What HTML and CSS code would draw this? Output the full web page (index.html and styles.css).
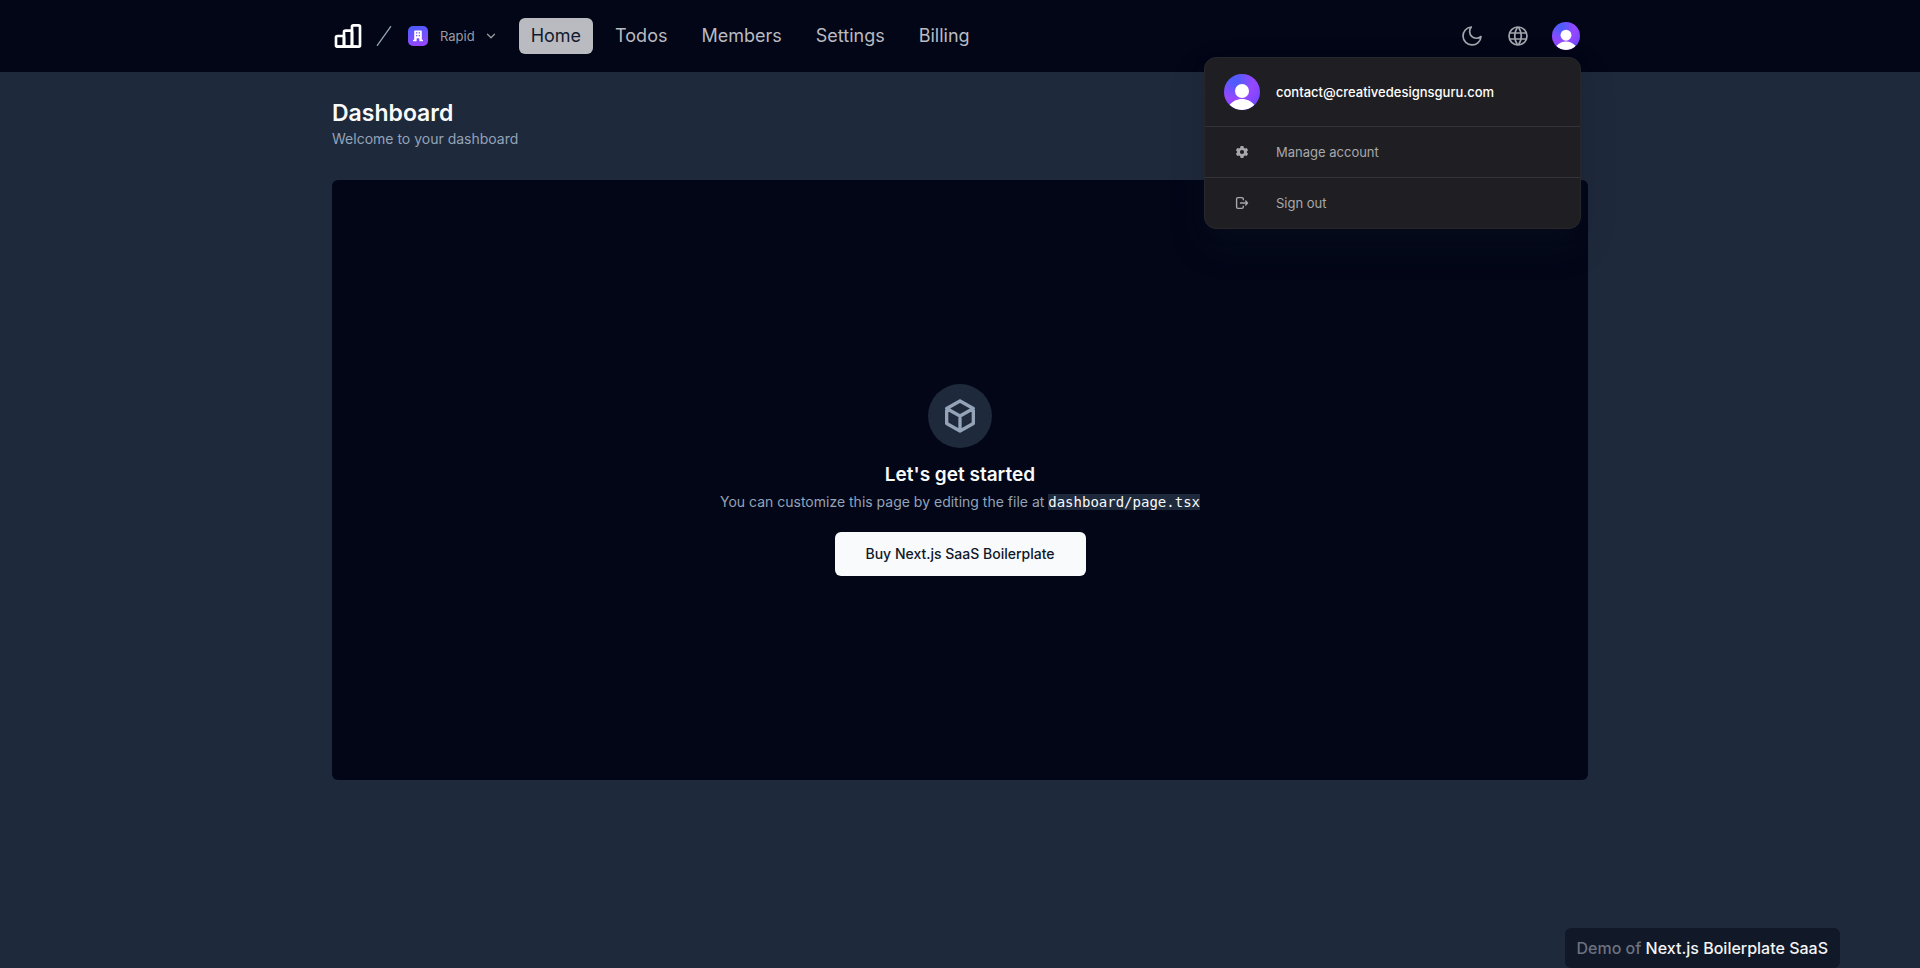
FILE: index.html
```html
<!DOCTYPE html>
<html lang="en">
<head>
<meta charset="utf-8">
<meta name="viewport" content="width=device-width, initial-scale=1">
<title>Dashboard</title>
<link rel="stylesheet" href="styles.css">
</head>
<body>
<header class="topbar">
  <div class="container topbar-inner">
    <a class="logo" href="#" aria-label="Home page">
      <svg width="32" height="32" viewBox="0 0 24 24" fill="none" stroke="currentColor" stroke-width="2" stroke-linecap="round" stroke-linejoin="round"><rect x="3" y="12" width="6" height="8" rx="1"/><rect x="9" y="8" width="6" height="12" rx="1"/><rect x="15" y="4" width="6" height="16" rx="1"/><path d="M4 20h14"/></svg>
    </a>
    <svg class="slash" width="32" height="32" viewBox="0 0 24 24" fill="none" stroke="currentColor" stroke-linecap="round"><path d="M17 5 7 19"/></svg>
    <button class="org" type="button">
      <span class="org-icon">
        <svg width="12" height="12" viewBox="0 0 12 12" fill="#fff"><path fill-rule="evenodd" d="M2.2 1.1C2.2.7 2.5.4 2.9.4h6.2c.4 0 .7.3.7.7v8.6h.6c.4 0 .7.3.7.8s-.3.8-.7.8H7.4V9c0-.4-.3-.7-.7-.7H5.3c-.4 0-.7.3-.7.7v2.300H1.600c-.4 0-.7-.3-.7-.8s.3-.8.7-.8h.6zM4 2.300v1.300h1.300V2.300zm2.700 0v1.300H8V2.300zM4 5v1.300h1.300V5zm2.700 0v1.300H8V5z"/></svg>
      </span>
      <span>Rapid</span>
      <svg class="chevron" width="10" height="10" viewBox="0 0 10 10" fill="none" stroke="currentColor" stroke-width="1.300" stroke-linecap="round" stroke-linejoin="round"><path d="m1.500 3.200 3.500 3.500 3.500-3.500"/></svg>
    </button>
    <nav class="nav" aria-label="Main">
      <a class="active" href="#" aria-current="page">Home</a>
      <a href="#">Todos</a>
      <a href="#">Members</a>
      <a href="#">Settings</a>
      <a href="#">Billing</a>
    </nav>
    <div class="actions">
      <button class="icon-button" type="button" aria-label="Toggle theme">
        <svg width="24" height="24" viewBox="0 0 24 24" fill="none" stroke="currentColor" stroke-width="1.700" stroke-linecap="round" stroke-linejoin="round"><path d="M11.300 3a9 9 0 1 0 9.700 9.500A6.800 6.800 0 0 1 11.300 3z"/></svg>
      </button>
      <button class="icon-button" type="button" aria-label="Change language">
        <svg width="24" height="24" viewBox="0 0 24 24" fill="none" stroke="currentColor" stroke-width="1.700"><circle cx="12" cy="12" r="9"/><path d="M3.600 9h16.800M3.600 15h16.800M11.500 3a17 17 0 0 0 0 18M12.500 3a17 17 0 0 1 0 18"/></svg>
      </button>
      <div class="user">
        <button class="avatar" type="button" aria-label="Open user menu" aria-expanded="true">
          <svg width="28" height="28" viewBox="0 0 36 36" fill="#fff"><circle cx="18" cy="17" r="7"/><path d="M5.500 31c3-3.700 7.500-6 12.500-6s9.500 2.300 12.500 6A18 18 0 0 1 18 36 18 18 0 0 1 5.500 31z"/></svg>
        </button>
        <div class="menu">
          <div class="menu-head">
            <span class="menu-icon"><span class="avatar avatar-large">
              <svg width="36" height="36" viewBox="0 0 36 36" fill="#fff"><circle cx="18" cy="17" r="7"/><path d="M5.500 31c3-3.700 7.500-6 12.500-6s9.500 2.300 12.500 6A18 18 0 0 1 18 36 18 18 0 0 1 5.500 31z"/></svg>
            </span></span>
            <span>contact@creativedesignsguru.com</span>
          </div>
          <button class="menu-item" type="button">
            <span class="menu-icon"><svg width="16" height="16" viewBox="0 0 16 16" fill="currentColor"><path fill-rule="evenodd" d="M6.600 2h2.800l.4 1.700 1.200.7 1.700-.5 1.400 2.400L12.900 7.500v1l1.200 1.200-1.400 2.400-1.700-.5-1.200.7L9.400 14H6.600l-.4-1.700-1.200-.7-1.700.5-1.400-2.400 1.200-1.200v-1L1.900 6.300l1.400-2.400 1.700.5 1.200-.7zM8 5.900a2.100 2.100 0 1 0 0 4.200 2.100 2.100 0 0 0 0-4.200z"/></svg></span>
            <span>Manage account</span>
          </button>
          <button class="menu-item" type="button">
            <span class="menu-icon"><svg width="16" height="16" viewBox="0 0 16 16" fill="none" stroke="currentColor" stroke-width="1.400" stroke-linecap="round" stroke-linejoin="round"><path d="M9.300 4.700V4c0-.8-.6-1.400-1.400-1.400H4c-.8 0-1.400.6-1.400 1.400v8c0 .8.6 1.400 1.400 1.400h3.900c.8 0 1.400-.6 1.400-1.400v-.7M6.500 8h7M11.700 6.100 13.500 8l-1.800 1.900"/></svg></span>
            <span>Sign out</span>
          </button>
        </div>
      </div>
    </div>
  </div>
</header>
<main class="container main">
  <h1>Dashboard</h1>
  <p class="subtitle">Welcome to your dashboard</p>
  <section class="card">
    <div class="card-icon">
      <svg width="40" height="40" viewBox="0 0 24 24" fill="none" stroke="currentColor" stroke-width="2" stroke-linejoin="round" stroke-linecap="round"><path d="m12 3 8 4.500v9L12 21l-8-4.500v-9L12 3M12 12l8-4.500M12 12v9M12 12 4 7.500"/></svg>
    </div>
    <h2>Let's get started</h2>
    <p class="hint">You can customize this page by editing the file at <code>dashboard/page.tsx</code></p>
    <a class="buy" href="#">Buy Next.js SaaS Boilerplate</a>
  </section>
</main>
<aside class="demo">Demo of <a href="#">Next.js Boilerplate SaaS</a></aside>
</body>
</html>
```
FILE: styles.css
```css
* { box-sizing: border-box; }
body {
  margin: 0;
  min-height: 100vh;
  background: #1e293b;
  color: #f8fafc;
  font-family: Inter, "Liberation Sans", sans-serif;
  font-size: 14px;
  line-height: 20px;
}
h1, h2, p { margin: 0; }
button { padding: 0; border: 0; background: none; color: inherit; font: inherit; cursor: pointer; }
a { color: inherit; text-decoration: none; }
svg { display: block; flex: none; }
.container { max-width: 1280px; margin: 0 auto; padding: 0 12px; }

.topbar { background: #020617; }
.topbar-inner { display: flex; align-items: center; height: 72px; }
.logo { color: #fff; }
.slash { margin-left: 4px; color: #94a3b8; }
.org { display: flex; align-items: center; gap: 12px; margin-left: 8px; font-size: 13px; color: #9a9ba1; }
.org .chevron { margin-left: -1px; }
.org-icon {
  display: grid; place-items: center; width: 20px; height: 20px; border-radius: 5px;
  background: linear-gradient(165deg, #4f5bff 10%, #9747ff 90%);
}
.nav { display: flex; gap: 10px; margin-left: 23px; font-size: 18px; line-height: 28px; color: #b9bbc1; }
.nav a { padding: 4px 12px; border-radius: 6px; }
.nav .active { background: #b9bbc1; color: #131b2e; }
.actions { display: flex; align-items: center; margin-left: auto; margin-right: 8px; }
.icon-button { margin-right: 22px; color: #a3a7ad; }
.user { position: relative; }
.avatar {
  display: block; width: 28px; height: 28px; border-radius: 50%; overflow: hidden;
  background: radial-gradient(circle at 30% 18%, #4f5bff 8%, #9747ff 48%, #6c47ff 85%);
}
.avatar-large { width: 36px; height: 36px; }

.menu {
  position: absolute; top: 35px; right: -1px; width: 377px; overflow: hidden;
  border: 1px solid #27272b; border-radius: 12px; background: #1f1f23;
  box-shadow: 0 16px 36px rgba(34, 42, 53, .2), 0 5px 15px rgba(0, 0, 0, .08);
  font-size: 13px; color: #a8a8ab;
}
.menu-head, .menu-item { display: flex; align-items: center; gap: 16px; width: 100%; padding: 16px 20px 16px 19px; text-align: left; }
.menu-head { height: 68px; color: #fff; font-weight: 500; }
.menu-item { height: 51px; border-top: 1px solid #323238; }
.menu-icon { display: grid; place-items: center; width: 36px; }

.main { padding-top: 25px; padding-bottom: 32px; }
h1 { font-size: 23px; line-height: 32px; font-weight: 600; }
.subtitle { color: #94a3b8; }
.card {
  display: flex; flex-direction: column; align-items: center; justify-content: center;
  min-height: 600px; margin-top: 31px; border-radius: 6px; background: #020617;
}
.card-icon { display: grid; place-items: center; width: 64px; height: 64px; border-radius: 50%; background: #1e293b; color: #94a3b8; }
h2 { margin-top: 13px; font-size: 19px; line-height: 28px; font-weight: 600; }
.hint { margin-top: 3px; color: #94a3b8; }
code { background: #1e293b; color: #f8fafc; font: 14px "DejaVu Sans Mono", monospace; }
.buy { margin-top: 20px; padding: 12px 31px; border-radius: 6px; background: #f8fafc; color: #0f172a; font-weight: 500; }
.demo {
  position: fixed; right: 80px; bottom: 0; padding: 8px 12px; border-radius: 6px;
  background: #111827; color: #6b7280; font-size: 16px; line-height: 24px; font-weight: 500;
}
.demo a { color: #f3f4f6; }
```
